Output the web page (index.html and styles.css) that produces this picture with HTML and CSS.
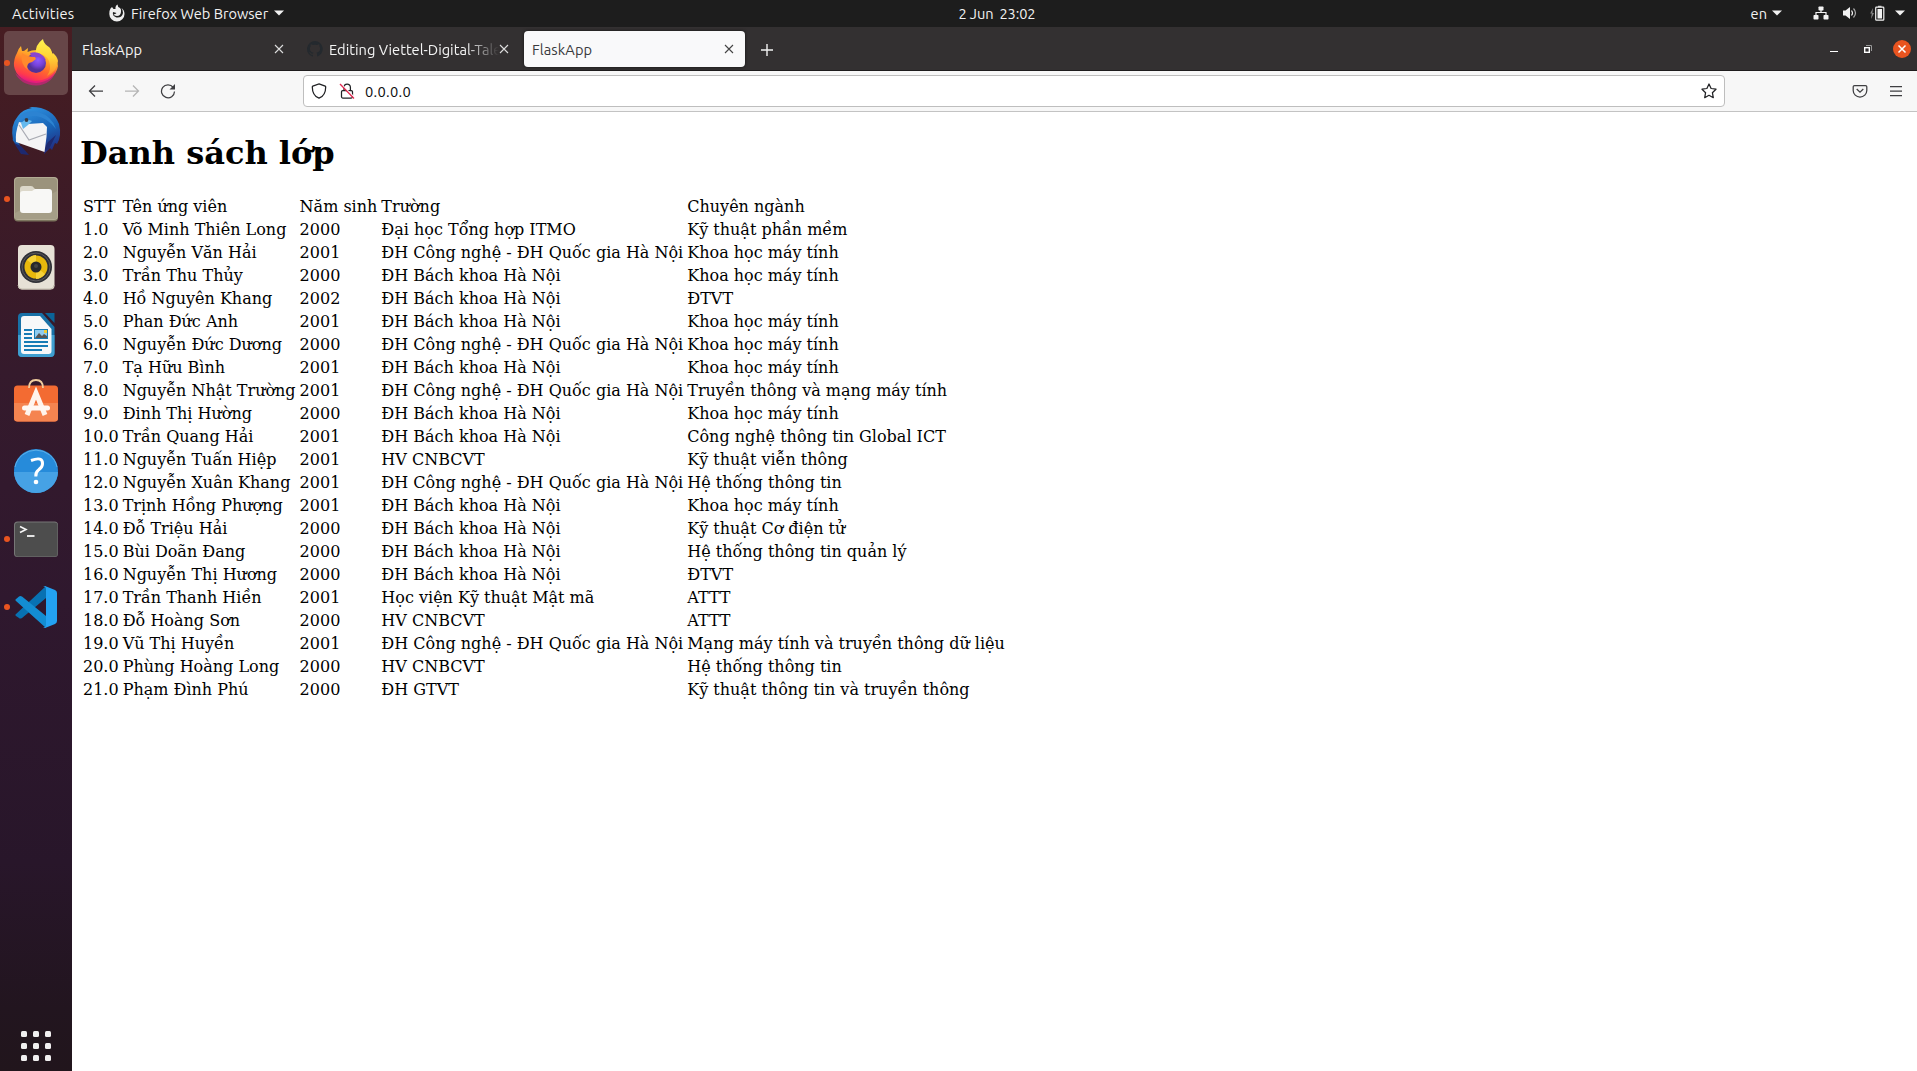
FILE: index.html
```html
<!DOCTYPE html>
<html lang="vi">
<head>
<meta charset="utf-8">
<title>FlaskApp</title>
<link rel="stylesheet" href="styles.css">
</head>
<body>
<header class="topbar">
  <div class="left">
    <span class="activities">Activities</span>
    <div class="app-menu">
      <svg width="18" height="18" viewBox="0 0 18 18"><path d="M2.500 4.500L4 3l1.500 2h2Q7 2 9.500.5 9.500 3 12 4q1.500 1 1 4-.500 4-4 4-3 0-3.500-2 2 .5 3-1L5 8q-1 4 3.500 5.500Q14 14 15 9q0-3-1.500-5Q16.500 6 16.500 10a7.600 7.600 0 0 1-15.200 0q-.3-3 1.200-5.500z" fill="#eee"/></svg>
      <span class="app-name">Firefox Web Browser</span>
      <svg width="10" height="6" viewBox="0 0 10 6"><path d="M0 .5h10L5 5.5z" fill="#f2f2f2"/></svg>
    </div>
  </div>
  <div class="clock"><span>2 Jun</span><span>23:02</span></div>
  <div class="status">
    <span class="lang">en</span>
    <svg class="lang-arrow" width="10" height="6" viewBox="0 0 10 6"><path d="M0 .5h10L5 5.5z" fill="#f2f2f2"/></svg>
    <svg class="net" width="16" height="16" viewBox="0 0 16 16" fill="#f2f2f2"><rect x="5.5" y="1.500" width="5" height="4" rx=".7"/><rect x="0.500" y="10" width="5" height="4.500" rx=".7"/><rect x="10.500" y="10" width="5" height="4.500" rx=".7"/><path d="M3 10V7.500h10V10M8 5v3" fill="none" stroke="#f2f2f2" stroke-width="1.200"/></svg>
    <svg class="vol" width="16" height="16" viewBox="0 0 16 16"><path d="M1 5.500h2.500L8 2v12L3.500 10.500H1z" fill="#f2f2f2"/><path d="M9.500 5.500q2 2.500 0 5" fill="none" stroke="#f2f2f2" stroke-width="1.200"/><path d="M11.500 3.500q4 4.500 0 9" fill="none" stroke="#aaa" stroke-width="1.200"/></svg>
    <svg class="bat" width="16" height="16" viewBox="0 0 16 16"><path d="M4 3L1.200 8.500h1.600L2 14l3-6H3.400z" fill="#888"/><rect x="6.700" y="2.200" width="8.100" height="13" rx=".8" fill="none" stroke="#f2f2f2" stroke-width="1.200"/><rect x="8.500" y="4" width="4.500" height="9.500" fill="#f2f2f2"/><path d="M9 .8h3.500v1H9z" fill="#f2f2f2"/></svg>
    <svg width="10" height="6" viewBox="0 0 10 6"><path d="M0 .5h10L5 5.500z" fill="#f2f2f2"/></svg>
  </div>
</header>
<div class="desktop">
  <nav class="dock">
    <div class="app running focused">
      <svg viewBox="0 0 64 64">
        <defs>
          <linearGradient id="fx" x1=".8" y1="0" x2=".35" y2="1"><stop offset="0" stop-color="#fff44f"/><stop offset=".3" stop-color="#ffb02a"/><stop offset=".6" stop-color="#ff6a2c"/><stop offset=".85" stop-color="#ff3a4c"/><stop offset="1" stop-color="#e31587"/></linearGradient>
          <linearGradient id="fy" x1="0" y1="0" x2="0" y2="1"><stop offset="0" stop-color="#fff44f"/><stop offset=".5" stop-color="#ffd235"/><stop offset="1" stop-color="#ff8a2a"/></linearGradient>
          <radialGradient id="fp" cx=".6" cy=".35"><stop offset="0" stop-color="#9059ff"/><stop offset=".6" stop-color="#7542d8"/><stop offset="1" stop-color="#533199"/></radialGradient>
        </defs>
        <path d="M13 22q1-4 4-7l1 5 2 0 4-3-.5 4q4-2 9-2l10-3q5 4 7 8l1 5q3 2 3.500 6a22.200 19.500 0 0 1-44 0q-.5-7 3-13z" fill="url(#fx)"/>
        <path d="M39 8q-8 6-7 14 9 0 13 8 3 8-2 15 10-5 11-15-1-5-5-8l-.500 2q-1-7-5-9-4-3-4.500-7z" fill="url(#fy)"/>
        <path d="M11 42q9 9 21 8 14-1 20-11-4 15-20 15.500-15-.5-21-12.500z" fill="#e31587" opacity=".6"/>
        <circle cx="32" cy="32" r="10" fill="url(#fp)"/>
        <path d="M18 22q5 4 13 4l1 2q-3 3-7 4-3 3-1 7-8-5-6-17z" fill="#ff8a2c"/>
        <path d="M26 22q10-3 16 7-6-4-14-3z" fill="#8a45d0"/>
      </svg>
    </div>
    <div class="app">
      <svg viewBox="0 0 64 64">
        <defs><linearGradient id="tb" x1=".3" y1="0" x2=".7" y2="1"><stop offset="0" stop-color="#2f92e0"/><stop offset=".55" stop-color="#1962b5"/><stop offset="1" stop-color="#22287c"/></linearGradient></defs>
        <path d="M9 41Q6 26 14 17q5-7 14-8l-3-1q23-1 30 17 3 12-2 20l-2-1-3 7-2-2-6 6 1-6-9-2-19-7 4 9 6 5-9-5-6-9z" fill="url(#tb)"/>
        <path d="M14 19q7-9 20-6 14 4 18 17-8-11-20-13Q20 16 12 26z" fill="#2c83d2"/>
        <path d="M10 44l7 11 8 1-8-9zM39 52l5-9 8-7-7 14z" fill="#1d2970"/>
        <path d="M15 23l9 2 15-1 4 4-.500 10-2 15-28.500-10q-1-9 3-20z" fill="#f4f4f5"/>
        <path d="M15 26l10 15 17-6" fill="none" stroke="#a9abb3" stroke-width="1.200"/>
        <path d="M17 24l5-4 6 2-4 4-5 4z" fill="#64b9ee"/><circle cx="22.500" cy="21" r="1.900" fill="#3a3a42"/>
      </svg>
    </div>
    <div class="app running">
      <svg viewBox="0 0 64 64"><rect x="10" y="10.500" width="44" height="44" rx="4" fill="#7c755e"/><rect x="10" y="10" width="44" height="43" rx="4" fill="#b2ab94"/><rect x="11" y="11" width="42" height="41" rx="3.500" fill="#9b937c"/><path d="M11 52V46L53 24v25q0 3-3 3z" fill="#a59e87"/><path d="M16 22q0-3 3-3h8q2 0 3 2l2 2v9H16z" fill="#dcd8ca"/><path d="M16 27q0-3 3-3h9l3-2h14q3 0 3 3v18q0 3-3 3H19q-3 0-3-3z" fill="#f8f8f6"/></svg>
    </div>
    <div class="app">
      <svg viewBox="0 0 64 64"><rect x="14" y="10" width="36.500" height="44.500" rx="4" fill="#e6e1d6"/><path d="M14 50q0 4 4 4h28q4 0 4-4" fill="none" stroke="#c5bfb0"/><circle cx="32" cy="32" r="16" fill="#2f3036"/><circle cx="32" cy="32" r="14" fill="none" stroke="#5b5b5e" stroke-width="1"/><circle cx="32" cy="32" r="11.500" fill="#e8b90c"/><path d="M32 32L23 25q4-5 9-5zM32 32l9 7q-4 5-9 5z" fill="#f5d239"/><circle cx="32" cy="32" r="5.500" fill="#28282b"/><circle cx="32" cy="31" r="2" fill="#444"/></svg>
    </div>
    <div class="app">
      <svg viewBox="0 0 64 64"><path d="M18 10h20l12.500 14v26q0 4-4 4H18q-4 0-4-4V14q0-4 4-4z" fill="#1871a7"/><path d="M14 32h36.500v18q0 4-4 4H18q-4 0-4-4z" fill="#3f9fd0"/><path d="M41 10h9.500v10z" fill="#0b6498"/><path d="M20 13h16l11.500 13v22q0 3-3 3H20q-3 0-3-3V16q0-3 3-3z" fill="#f7f8f9"/><path d="M20 27h8M20 31h8M20 35h8M20 39h24M20 43h24M20 47h18" stroke="#167bb5" stroke-width="2"/><rect x="30" y="26" width="14" height="10" fill="#167bb5"/><rect x="31" y="27" width="12" height="8" fill="#8ecbef"/><path d="M31 35l4-5 3 3 2-2 3 2v2z" fill="#555"/><rect x="40" y="27" width="3" height="3" fill="#f0cb36"/></svg>
    </div>
    <div class="app">
      <svg viewBox="0 0 64 64"><rect x="10" y="14.500" width="44" height="36" rx="3.500" fill="#f36b32"/><path d="M10 32h44v15q0 3.500-3.500 3.500h-37Q10 50.500 10 47z" fill="#f58450"/><path d="M25 17q0-8 7-8t7 8" fill="none" stroke="#f0cd9e" stroke-width="1.800"/><path d="M23 44l9-22 9 22" fill="none" stroke="#fff4ec" stroke-width="5"/><rect x="18" y="34.500" width="28" height="5" rx="2.500" fill="#fff8f3"/></svg>
    </div>
    <div class="app">
      <svg viewBox="0 0 64 64"><circle cx="32" cy="32" r="22" fill="#268bda"/><path d="M10 33h44a22 21 0 0 1-44 0z" fill="#46a2e5"/><path d="M11 28a21.500 21.500 0 0 1 42 0" fill="none" stroke="#6ab9ec" stroke-width=".8"/><path d="M27 21.500Q39 17 38.500 25q0 3-4 6-3 2-2.700 6.500" fill="none" stroke="#fff" stroke-width="3"/><circle cx="32" cy="43" r="2.300" fill="#fff"/></svg>
    </div>
    <div class="app running">
      <svg viewBox="0 0 64 64"><rect x="10" y="14.500" width="44" height="35.500" rx="3.500" fill="#777"/><rect x="11" y="15.500" width="42.500" height="34" rx="3" fill="#4d4d4d"/><path d="M16 19.500l6 3-6 3" fill="none" stroke="#f5f5f5" stroke-width="1.600"/><path d="M23 29h7.500" stroke="#f5f5f5" stroke-width="1.800"/></svg>
    </div>
    <div class="app running">
      <svg viewBox="0 0 64 64"><path d="M11.500 39.500L42 11v12L18 43q-2 1-3 0l-3-2q-1-1-.500-1.500z" fill="#0871b2"/><path d="M11.500 24.500l3.500-3q1-1 3 0L42 41v12L12 26q-1-1-.500-1.500z" fill="#138dd2"/><path d="M41 11l10 4q2 1 2 3v28q0 2-2 3l-10 4q-1 0-2-1 3 1 3-2V14q0-3-3-2z" fill="#23a2f2"/></svg>
    </div>
    <div class="show-apps"><i></i><i></i><i></i><i></i><i></i><i></i><i></i><i></i><i></i></div>
  </nav>
  <main class="window">
    <div class="tabs">
      <div class="tab"><span class="title">FlaskApp</span><svg class="x" viewBox="0 0 10 10"><path d="M1 1l8 8M9 1L1 9"/></svg></div>
      <div class="tab">
        <svg class="favicon" viewBox="0 0 16 16"><path d="M8 0a8 8 0 0 0-2.500 15.600c.4.100.5-.2.500-.4v-1.500c-2.200.5-2.700-1-2.700-1-.400-.9-.9-1.200-.9-1.200-.7-.5.100-.5.100-.5.800.1 1.200.8 1.200.8.700 1.200 1.900.9 2.300.7.100-.5.300-.9.500-1.100-1.800-.2-3.600-.9-3.600-4 0-.9.300-1.600.8-2.100-.1-.2-.4-1 .1-2.100 0 0 .7-.2 2.200.8a7.500 7.500 0 0 1 4 0c1.500-1 2.200-.8 2.200-.8.400 1.100.2 1.900.1 2.100.5.600.8 1.300.8 2.100 0 3.100-1.900 3.800-3.700 4 .3.300.6.800.6 1.500v2.200c0 .2.100.500.500.400A8 8 0 0 0 8 0z" fill="#24292e"/></svg>
        <span class="title long">Editing Viettel-Digital-Tale</span><svg class="x" viewBox="0 0 10 10"><path d="M1 1l8 8M9 1L1 9"/></svg>
      </div>
      <div class="tab active"><span class="title">FlaskApp</span><svg class="x" viewBox="0 0 10 10"><path d="M1 1l8 8M9 1L1 9"/></svg></div>
      <svg class="new-tab" viewBox="0 0 12 12"><path d="M6 0v12M0 6h12"/></svg>
      <div class="controls">
        <svg width="8" height="10" viewBox="0 0 8 10"><path d="M0 7.500h8" stroke="#fff"/></svg>
        <svg width="8" height="8" viewBox="0 0 8 8"><path d="M2 .5h5.500V6" fill="none" stroke="#999"/><rect x=".7" y="2.700" width="4.600" height="4.600" fill="none" stroke="#fff" stroke-width="1.400"/></svg>
        <svg class="close" viewBox="0 0 18 18"><circle cx="9" cy="9" r="9" fill="#e95420"/><path d="M5.500 5.500l7 7M12.500 5.500l-7 7" stroke="#fff" stroke-width="1.500"/></svg>
      </div>
    </div>
    <div class="toolbar">
      <svg class="icon" viewBox="0 0 16 16"><path d="M15 8H1.700M7 2.500L1.500 8 7 13.500"/></svg>
      <svg class="icon dim" viewBox="0 0 16 16"><path d="M1 8h13.300M9 2.500L14.500 8 9 13.500"/></svg>
      <svg class="icon" viewBox="0 0 16 16"><path d="M13.200 4.400A6.500 6.500 0 1 0 14.500 8.500"/><path d="M15 1v5.500H9.500z" fill="#3f3f42" stroke="none"/></svg>
      <div class="urlbar">
        <svg class="icon dark" viewBox="0 0 16 16"><path d="M8 .9l6.200 2.300q.5.200.5.700c0 5-1.500 9.200-6.700 11.300C2.800 13.100 1.300 8.900 1.300 3.900q0-.5.500-.7z"/></svg>
        <svg class="icon dark lock" viewBox="0 0 16 16"><rect x="2.500" y="7.500" width="11" height="7.500" rx="1.200"/><path d="M5 7.500V4.200a3.200 3.200 0 0 1 6.400 0v3.300"/><path d="M2 1l14 14" stroke="#fff" stroke-width="1.500"/><path d="M1 1l14 14.500" stroke="#e22850" stroke-width="1.300"/></svg>
        <span class="address">0.0.0.0</span>
        <svg class="icon dark star" viewBox="0 0 16 16"><path d="M8 1l2.100 4.500 4.900.7-3.600 3.500.9 5L8 12.300 3.700 14.700l.9-5L1 6.200l4.900-.7z" stroke-linejoin="round"/></svg>
      </div>
      <svg class="icon" viewBox="0 0 16 16"><path d="M2.500 2.500h11q1.300 0 1.300 1.300V7.500a6.800 6.500 0 0 1-13.600 0V3.800q0-1.300 1.300-1.300z"/><path d="M4.700 6L8 9.200 11.300 6"/></svg>
      <svg class="icon menu" viewBox="0 0 16 16"><path d="M2 3.500h12M2 8h12M2 12.500h12"/></svg>
    </div>
    <article class="page">
      <h1>Danh sách lớp</h1>
      <table>
        <tr><td>STT</td><td>Tên ứng viên</td><td>Năm sinh</td><td>Trường</td><td>Chuyên ngành</td></tr>
        <tr><td>1.0</td><td>Võ Minh Thiên Long</td><td>2000</td><td>Đại học Tổng hợp ITMO</td><td>Kỹ thuật phần mềm</td></tr>
        <tr><td>2.0</td><td>Nguyễn Văn Hải</td><td>2001</td><td>ĐH Công nghệ - ĐH Quốc gia Hà Nội</td><td>Khoa học máy tính</td></tr>
        <tr><td>3.0</td><td>Trần Thu Thủy</td><td>2000</td><td>ĐH Bách khoa Hà Nội</td><td>Khoa học máy tính</td></tr>
        <tr><td>4.0</td><td>Hồ Nguyên Khang</td><td>2002</td><td>ĐH Bách khoa Hà Nội</td><td>ĐTVT</td></tr>
        <tr><td>5.0</td><td>Phan Đức Anh</td><td>2001</td><td>ĐH Bách khoa Hà Nội</td><td>Khoa học máy tính</td></tr>
        <tr><td>6.0</td><td>Nguyễn Đức Dương</td><td>2000</td><td>ĐH Công nghệ - ĐH Quốc gia Hà Nội</td><td>Khoa học máy tính</td></tr>
        <tr><td>7.0</td><td>Tạ Hữu Bình</td><td>2001</td><td>ĐH Bách khoa Hà Nội</td><td>Khoa học máy tính</td></tr>
        <tr><td>8.0</td><td>Nguyễn Nhật Trường</td><td>2001</td><td>ĐH Công nghệ - ĐH Quốc gia Hà Nội</td><td>Truyền thông và mạng máy tính</td></tr>
        <tr><td>9.0</td><td>Đinh Thị Hường</td><td>2000</td><td>ĐH Bách khoa Hà Nội</td><td>Khoa học máy tính</td></tr>
        <tr><td>10.0</td><td>Trần Quang Hải</td><td>2001</td><td>ĐH Bách khoa Hà Nội</td><td>Công nghệ thông tin Global ICT</td></tr>
        <tr><td>11.0</td><td>Nguyễn Tuấn Hiệp</td><td>2001</td><td>HV CNBCVT</td><td>Kỹ thuật viễn thông</td></tr>
        <tr><td>12.0</td><td>Nguyễn Xuân Khang</td><td>2001</td><td>ĐH Công nghệ - ĐH Quốc gia Hà Nội</td><td>Hệ thống thông tin</td></tr>
        <tr><td>13.0</td><td>Trịnh Hồng Phượng</td><td>2001</td><td>ĐH Bách khoa Hà Nội</td><td>Khoa học máy tính</td></tr>
        <tr><td>14.0</td><td>Đỗ Triệu Hải</td><td>2000</td><td>ĐH Bách khoa Hà Nội</td><td>Kỹ thuật Cơ điện tử</td></tr>
        <tr><td>15.0</td><td>Bùi Doãn Đang</td><td>2000</td><td>ĐH Bách khoa Hà Nội</td><td>Hệ thống thông tin quản lý</td></tr>
        <tr><td>16.0</td><td>Nguyễn Thị Hương</td><td>2000</td><td>ĐH Bách khoa Hà Nội</td><td>ĐTVT</td></tr>
        <tr><td>17.0</td><td>Trần Thanh Hiền</td><td>2001</td><td>Học viện Kỹ thuật Mật mã</td><td>ATTT</td></tr>
        <tr><td>18.0</td><td>Đỗ Hoàng Sơn</td><td>2000</td><td>HV CNBCVT</td><td>ATTT</td></tr>
        <tr><td>19.0</td><td>Vũ Thị Huyền</td><td>2001</td><td>ĐH Công nghệ - ĐH Quốc gia Hà Nội</td><td>Mạng máy tính và truyền thông dữ liệu</td></tr>
        <tr><td>20.0</td><td>Phùng Hoàng Long</td><td>2000</td><td>HV CNBCVT</td><td>Hệ thống thông tin</td></tr>
        <tr><td>21.0</td><td>Phạm Đình Phú</td><td>2000</td><td>ĐH GTVT</td><td>Kỹ thuật thông tin và truyền thông</td></tr>
      </table>
    </article>
  </main>
</div>
</body>
</html>
```
FILE: styles.css
```css
* { box-sizing: border-box; }
body {
  margin: 0;
  height: 1071px;
  display: flex;
  flex-direction: column;
  overflow: hidden;
  background: #fff;
  font-family: Ubuntu, "Noto Sans", sans-serif;
  font-size: 14.67px;
}
svg { display: block; flex: none; }

.topbar {
  height: 27px;
  flex: none;
  display: flex;
  align-items: center;
  background: #1d1d1d;
  color: #f2f2f2;
  font-size: 14.6px;
  line-height: 25px;
  padding-bottom: 1px;
}
.left { width: 50%; display: flex; align-items: center; padding-left: 12px; }
.activities { width: 96px; letter-spacing: .25px; }
.app-menu { display: flex; align-items: center; }
.app-name { margin: 0 5px; width: 138px; white-space: nowrap; }
.clock { display: flex; gap: 6px; white-space: nowrap; letter-spacing: -.1px; }
.status { flex: 1; display: flex; align-items: center; justify-content: flex-end; padding-right: 12px; }
.lang-arrow { margin: 0 31px 0 5px; }
.vol { margin: 0 6px 0 13px; }
.bat { margin: 0 10px 0 5px; }

.desktop { flex: 1; display: flex; min-height: 0; }

.dock {
  width: 72px;
  flex: none;
  padding: 4px 4px 10px;
  display: flex;
  flex-direction: column;
  gap: 4px;
  background: linear-gradient(#471d22 0%, #3f1b25 13%, #351a2c 33%, #2f182e 55%, #28162a 80%, #22151f 94%, #21151c 100%);
}
.app { width: 64px; height: 64px; border-radius: 5px; position: relative; flex: none; }
.app svg { width: 64px; height: 64px; }
.focused { background: #674648; }
.running::before {
  content: "";
  position: absolute;
  left: 0;
  top: 29px;
  width: 6px;
  height: 6px;
  border-radius: 50%;
  background: #e95420;
}
.show-apps {
  margin: auto auto 0;
  display: grid;
  grid-template-columns: repeat(3, 6px);
  gap: 6px;
}
.show-apps i { height: 6px; border-radius: 1.5px; background: #f1eff0; }

.window { flex: 1; min-width: 0; display: flex; flex-direction: column; }
.tabs {
  height: 44px;
  flex: none;
  display: flex;
  gap: 4px;
  padding: 4px 6px 3px 2px;
  background: #333031;
  border-bottom: 1px solid #1e1c1d;
  color: #f4f4f4;
}
.tab { width: 221px; height: 36px; border-radius: 4px; display: flex; align-items: center; padding: 0 11px 0 8px; }
.title { flex: 1; min-width: 0; white-space: nowrap; overflow: hidden; line-height: 36px; padding-top: 1px; letter-spacing: .08px; }
.long { letter-spacing: 0; mask-image: linear-gradient(90deg, #000 calc(100% - 32px), transparent); }
.favicon { width: 16px; height: 16px; margin-right: 6px; }
.x { width: 10px; height: 10px; fill: none; stroke: #ddd; stroke-width: 1.1; }
.active { background: #f9f9fa; color: #3a3a3d; box-shadow: 0 0 3px #111; }
.active .x { stroke: #444; }
.new-tab { width: 12px; height: 12px; margin: 13px 0 0 12px; stroke: #f2f2f2; stroke-width: 1.4; }
.controls { margin-left: auto; height: 36px; display: flex; align-items: center; gap: 26px; }
.close { width: 18px; height: 18px; margin-left: -5px; }

.toolbar {
  height: 41px;
  flex: none;
  display: flex;
  align-items: center;
  gap: 20px;
  padding: 0 13px 0 16px;
  background: #f7f7f7;
  border-bottom: 1px solid #c3c3c3;
}
.icon { width: 16px; height: 16px; fill: none; stroke: #3f3f42; stroke-width: 1.25; }
.dim { stroke: #b5b5b5; }
.dark { stroke: #202124; }
.urlbar {
  width: 1422px;
  height: 32px;
  margin: 0 107px;
  padding: 0 7px;
  display: flex;
  align-items: center;
  background: #fff;
  border: 1px solid #bebebe;
  border-radius: 4px;
}
.lock { margin: 0 10px 0 12px; }
.address { color: #0c0c0d; line-height: 30px; padding-top: 1px; letter-spacing: .3px; }
.star { margin-left: auto; }

.page { flex: 1; padding: 1px 8px 0; background: #fff; color: #000; font: 16px "DejaVu Serif", serif; }
.page h1 { margin: 21px 0 22px; font-size: 32px; font-weight: bold; }
.page table { border-spacing: 2px; }
.page td { padding: 1px; white-space: nowrap; }
```
